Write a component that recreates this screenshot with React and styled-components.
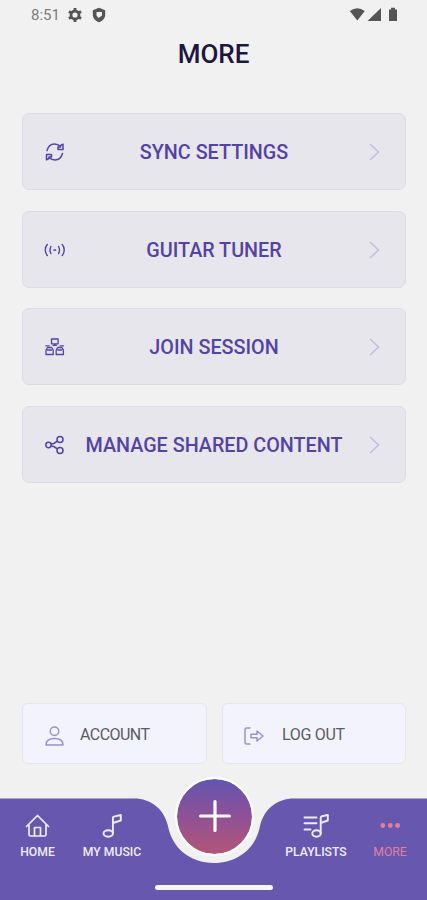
import React from "react";

import styled, {createGlobalStyle} from 'styled-components';

const GlobalStyle = createGlobalStyle`
  body {
    margin: 0;
    background-color: #f1f1f1;
    font-family: Roboto, "Liberation Sans", sans-serif;
  }

  button {
    font-family: inherit;
    border: none;
    background: none;
    padding: 0;
  }

  svg {
    display: block;
    flex: none;
  }
`

const StyledScreen = styled.div`
  width: 427px;
  height: 900px;
  display: flex;
  flex-direction: column;
  overflow: hidden;
  background-color: #f1f1f1;
`

const StyledStatusBar = styled.div`
  height: 30px;
  padding: 0 29px 1px 31px;
  box-sizing: border-box;
  display: flex;
  align-items: center;
  justify-content: space-between;
  color: #555555;

  .group {
    display: flex;
    align-items: center;
    gap: 9px;
  }

  .time {
    width: 27px;
    font-size: 15px;
    line-height: 28px;
    color: #7c7c7c;
  }
`

const StyledTitle = styled.h1`
  height: 48px;
  margin: 0 0 35px;
  font-size: 26px;
  font-weight: 500;
  line-height: 48px;
  text-align: center;
  color: #1d1740;
`

const StyledMenu = styled.div`
  padding: 0 21px 0 22px;
  display: flex;
  flex-direction: column;
  gap: 20.7px;
`

const StyledMenuButton = styled.button`
  height: 77px;
  padding: 1px 25px 0 21px;
  box-sizing: border-box;
  display: grid;
  grid-template-columns: 21px 1fr 11px;
  align-items: center;
  border: 1.5px solid #dddce6;
  border-radius: 7px;
  background-color: #e7e6ec;
  color: #5443a2;

  .label {
    margin: 0 -18px 0 -24px;
    padding-top: 2px;
    font-size: 19.75px;
    font-weight: 500;
    line-height: 24px;
    white-space: nowrap;
    text-align: center;
  }
`

const StyledActions = styled.div`
  margin-top: auto;
  padding: 0 21px 34px 22px;
  display: grid;
  grid-template-columns: 185px 184px;
  justify-content: space-between;
`

const StyledActionButton = styled.button`
  height: 61px;
  padding: 2px 0 0 ${props => props.$inset}px;
  box-sizing: border-box;
  display: flex;
  align-items: center;
  gap: ${props => props.$gap}px;
  border: 1.5px solid #e6e5f0;
  border-radius: 6px;
  background-color: #f2f3fc;
  color: #5b5b63;
  font-size: 16px;
  line-height: 20px;
  letter-spacing: ${props => props.$spacing}px;

  svg {
    margin-top: 3px;
    color: #9a90cb;
  }
`

const StyledNav = styled.nav`
  position: relative;
  height: 102px;
  display: flex;
  flex-direction: column;
  justify-content: space-between;

  .shape {
    position: absolute;
    left: 0;
    top: 0;
  }

  .items {
    position: relative;
    display: grid;
    grid-template-columns: 75px 74px 130px 74px 74px;
  }

  .homeBar {
    position: relative;
    width: 118px;
    height: 4.5px;
    margin: 0 auto 10.5px;
    border-radius: 3px;
    background-color: #f6f5fb;
  }
`

const StyledNavItem = styled.button`
  height: 66px;
  padding-top: 16px;
  box-sizing: border-box;
  display: flex;
  flex-direction: column;
  align-items: center;
  gap: 7px;
  color: ${props => props.$active ? '#e27f9f' : '#f0edfb'};

  span {
    font-size: 12.2px;
    font-weight: ${props => props.$active ? 400 : 500};
    line-height: 14px;
    white-space: nowrap;
  }
`

const StyledAddButton = styled.button`
  position: absolute;
  left: 175px;
  top: -21.5px;
  width: 79px;
  height: 79px;
  box-sizing: border-box;
  display: flex;
  align-items: center;
  justify-content: center;
  border: 2.5px solid #ffffff;
  border-radius: 50%;
  background: linear-gradient(#6455b0 5%, #8f5196 50%, #b25578 95%) border-box;
  background-clip: padding-box;
  color: #ffffff;
`

const Icon = ({width, height, stroke = 1.5, children}) => (
  <svg
    width={width}
    height={height}
    viewBox={`0 0 ${width} ${height}`}
    fill="none"
    stroke="currentColor"
    strokeWidth={stroke}
    strokeLinecap="round"
    strokeLinejoin="round"
  >
    {children}
  </svg>
)

const SyncIcon = () => (
  <Icon width={21} height={20} stroke={1.5}>
    <path d="M3 8.5C4.2 4.4 7 2 10.5 2c2.3 0 4.2.8 5.7 2.5M18.5 11.5c-1.2 4.1-4 6.5-7.5 6.5-2.3 0-4.2-.8-5.7-2.5" />
    <path d="M19 2.2v5.3h-5V5h2.5V3.5ZM2.5 17.8v-5.3h5V15H5v1.5Z" />
  </Icon>
)

const TunerIcon = () => (
  <Icon width={21} height={14} stroke={1.4}>
    <path d="M3.3 1.5C.6 4.5.6 9.5 3.3 12.5M18.2 1.5c2.7 3 2.7 8 0 11M6.9 3.5c-1.1 2.2-1.1 4.8 0 7M14.6 3.5c1.1 2.2 1.1 4.8 0 7" />
    <path d="M10 7h1.5" strokeWidth="1.7" />
  </Icon>
)

const SessionIcon = () => (
  <Icon width={21} height={18} stroke={1.3}>
    <path d="M7.5 1h6.6v4.8H7.5ZM9.1 7.3h3.4M10.8 5.8v1.5" />
    <path d="M5.2 7.8H1.8M19.5 7.8h-3.4" />
    <path d="M3.5 9.5h4.2l1.5 2.5v4.5H2V12ZM13.7 9.5h4.2l1.5 2.5v4.5h-7.2V12ZM3.5 12h4M13.8 12h4" />
  </Icon>
)

const ShareIcon = () => (
  <Icon width={21} height={20} stroke={1.5}>
    <circle cx="4.5" cy="10" r="2.7" />
    <circle cx="16" cy="4.5" r="3" />
    <circle cx="16" cy="15.5" r="3" />
    <path d="M7.2 9l2.6-.5 3.5-2.3M7.2 11l2.6.5 3.5 2.3" />
  </Icon>
)

const Chevron = () => (
  <svg width="11" height="18" viewBox="0 0 11 18" fill="none" stroke="#c2bedb" strokeWidth="1.5">
    <path d="M1 1l8.5 8L1 17" />
  </svg>
)

const AccountIcon = () => (
  <Icon width={19} height={20} stroke={1.5}>
    <circle cx="9.5" cy="5.2" r="4.3" />
    <path d="M1 19c0-4.3 3.2-6.5 8.5-6.5S18 14.7 18 19Z" />
  </Icon>
)

const LogOutIcon = () => (
  <Icon width={20} height={18} stroke={1.5}>
    <path d="M6 1H2.5Q1 1 1 2.5v13Q1 17 2.5 17H6" />
    <path d="M7 7.3h6V4l6 5-6 5v-3.3H7Z" />
  </Icon>
)

const HomeIcon = () => (
  <Icon width={25} height={24} stroke={1.7}>
    <path d="M1.5 12.5L12.5 1.5l11 11M4 10.5V20.5q0 1.5 1.5 1.5h14q1.5 0 1.5-1.5V10.5M9.500 21.5v-8h6v8" />
  </Icon>
)

const MusicIcon = () => (
  <Icon width={20} height={24} stroke={1.9}>
    <ellipse cx="6.2" cy="19.5" rx="4.7" ry="3.2" />
    <path d="M10.900 19.5V4Q10.900 3 11.900 2.700L18.800 1V6.500L10.900 9" />
  </Icon>
)

const PlaylistIcon = () => (
  <Icon width={26} height={24} stroke={1.9}>
    <path d="M1.5 3.5h12M1.5 9.3h12M1.5 15.5h6" />
    <ellipse cx="13.5" cy="19.5" rx="4.2" ry="3.2" />
    <path d="M17.7 19.5V3.8Q17.7 2.8 18.7 2.3L24.8 1V6.5L17.7 9" />
  </Icon>
)

const DotsIcon = () => (
  <svg width="20" height="24" viewBox="0 0 20 24" fill="currentColor">
    <circle cx="2.8" cy="11.5" r="2.4" />
    <circle cx="10.3" cy="11.5" r="2.4" />
    <circle cx="17.6" cy="11.5" r="2.4" />
  </svg>
)

const StatusBar = () => (
  <StyledStatusBar>
    <div className={'group'}>
      <span className={'time'}>8:51</span>
      <svg width="16" height="16" viewBox="0 0 16 16" fill="none" stroke="currentColor">
        <circle cx="8" cy="8" r="4" strokeWidth="2.8" />
        <path d="M8 1v3M8 12v3M1.9 4.5l2.6 1.5M11.5 10l2.6 1.5M1.9 11.5L4.5 10M11.5 6l2.6-1.5" strokeWidth="2.8" />
      </svg>
      <svg width="14" height="16" viewBox="0 0 14 16">
        <path d="M7 .8l6.2 2.5v4.5c0 3.5-2.5 6-6.2 7.5C3.3 13.8.8 11.3.8 7.8V3.3Z" fill="currentColor" />
        <path d="M4.5 5H10v3.5L6.5 11 4.5 8.500Z" fill="#f1f1f1" />
      </svg>
    </div>
    <div className={'group'}>
      <svg width="49" height="15" viewBox="0 0 49 15" fill="currentColor">
        <path d="M.8 4Q8.300-1.500 15.800 4L8.300 13.500ZM32 1v13H18.500ZM40 2.500h2V.8h4v1.700h2V14h-8Z" />
      </svg>
    </div>
  </StyledStatusBar>
)

const menuItems = [
  {label: 'SYNC SETTINGS', icon: <SyncIcon />},
  {label: 'GUITAR TUNER', icon: <TunerIcon />},
  {label: 'JOIN SESSION', icon: <SessionIcon />},
  {label: 'MANAGE SHARED CONTENT', icon: <ShareIcon />},
]

const App = () => {
  return (
    <StyledScreen>
      <GlobalStyle />
      <StatusBar />
      <StyledTitle>MORE</StyledTitle>
      <StyledMenu>
        {menuItems.map(item => (
          <StyledMenuButton key={item.label}>
            {item.icon}
            <span className={'label'}>{item.label}</span>
            <Chevron />
          </StyledMenuButton>
        ))}
      </StyledMenu>
      <StyledActions>
        <StyledActionButton $inset={22} $gap={16} $spacing={-0.55}>
          <AccountIcon />
          ACCOUNT
        </StyledActionButton>
        <StyledActionButton $inset={21} $gap={18} $spacing={-0.3}>
          <LogOutIcon />
          LOG OUT
        </StyledActionButton>
      </StyledActions>
      <StyledNav>
        <svg className={'shape'} width="427" height="102" viewBox="0 0 427 102">
          <path
            d="M0 .5H134C151 .5 164 11 168 28C172 50 190 65 214 65C238 65 256 50 260 28C264 11 277 .5 294 .5H427V102H0Z"
            fill="#6757ae"
          />
        </svg>
        <div className={'items'}>
          <StyledNavItem>
            <HomeIcon />
            <span>HOME</span>
          </StyledNavItem>
          <StyledNavItem>
            <MusicIcon />
            <span>MY MUSIC</span>
          </StyledNavItem>
          <div />
          <StyledNavItem>
            <PlaylistIcon />
            <span>PLAYLISTS</span>
          </StyledNavItem>
          <StyledNavItem $active>
            <DotsIcon />
            <span>MORE</span>
          </StyledNavItem>
        </div>
        <div className={'homeBar'} />
        <StyledAddButton>
          <Icon width={32} height={32} stroke={3.2}>
            <path d="M16 1.6v28.8M1.6 16h28.8" />
          </Icon>
        </StyledAddButton>
      </StyledNav>
    </StyledScreen>
  )
}

export default App
